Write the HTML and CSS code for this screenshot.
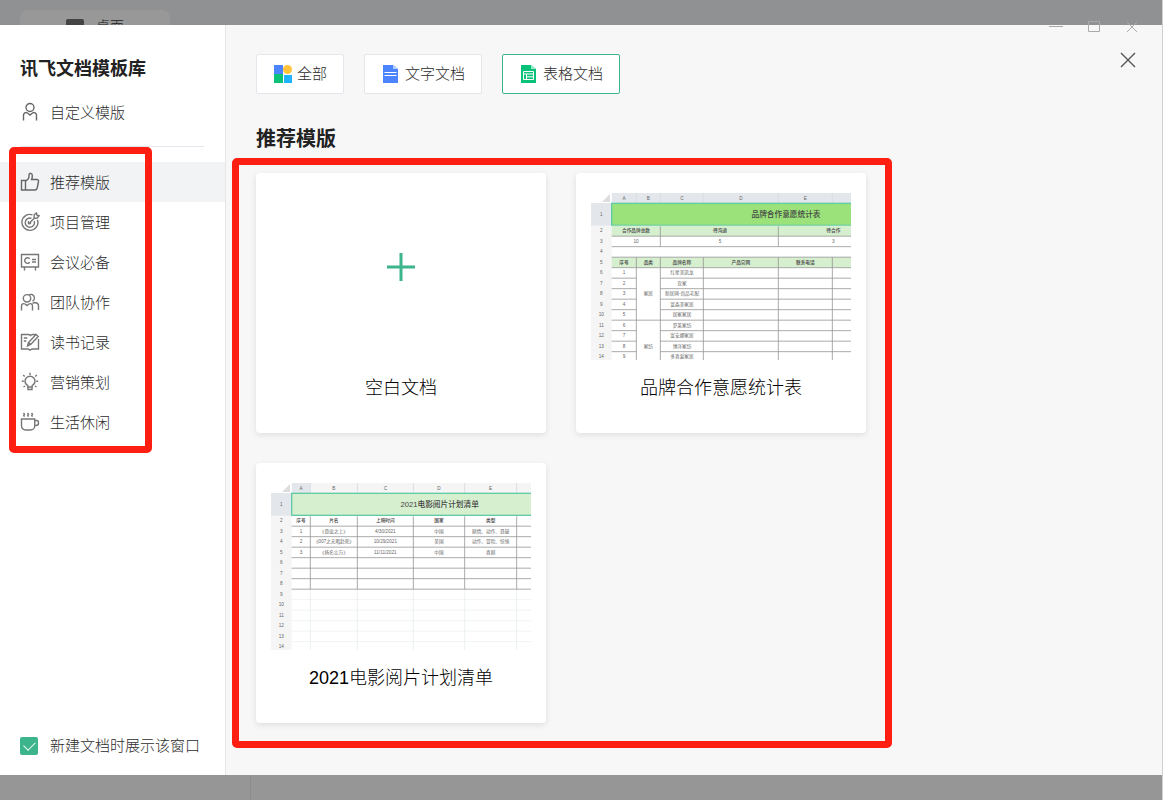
FILE: index.html
```html
<!DOCTYPE html>
<html lang="zh-CN">
<head>
    <meta charset="UTF-8">
    <meta name="viewport" content="width=device-width, initial-scale=1.0">
    <title>讯飞文档模板库</title>
    <link rel="stylesheet" href="styles.css">
</head>
<body>
    <div class="desktop">
        <div class="topbar">
            <div class="tab">
                <span class="tab-icon"></span>
                <span>桌面</span>
            </div>
        </div>
        <div class="window-controls">
            <button type="button" aria-label="最小化"><svg width="14" height="14" viewBox="0 0 14 14"><path d="M0 6.500h14"/></svg></button>
            <button type="button" aria-label="最大化"><svg width="14" height="14" viewBox="0 0 14 14"><path d="M1.500 1.500h11v10h-11z"/></svg></button>
            <button type="button" aria-label="关闭窗口"><svg width="14" height="14" viewBox="0 0 14 14"><path d="M2 2l10 10M12 2L2 12"/></svg></button>
        </div>

        <div class="dialog">
            <aside class="sidebar">
                <h1>讯飞文档模板库</h1>
                <a class="item" href="#custom">
                    <svg class="icon" viewBox="0 0 20 20"><circle cx="10" cy="5.500" r="4"/><path d="M3.500 18.500v-5.300a2.600 2.600 0 0 1 4-2.200L10 13l2.500-2a2.600 2.600 0 0 1 4 2.200v5.300"/></svg>
                    自定义模版
                </a>
                <hr>
                <nav class="menu">
                    <a class="item active" href="#recommend">
                        <svg class="icon" viewBox="0 0 20 20"><path d="M1.500 8.500h4v9.500h-4zM5.500 9c2.200-.8 3.200-2 3.400-4l.2-2.500c.3-1.800 3-1.500 3.200.7.100 1.400-.2 3-.7 4.300h5.200c1.300 0 1.900.8 1.700 2l-1.300 6.500c-.3 1.300-1 2-2.200 2H5.500"/></svg>
                        推荐模版
                    </a>
                    <a class="item" href="#project">
                        <svg class="icon light" viewBox="0 0 20 20"><path d="M12.500 2.800a8 8 0 1 0 5 5M11.500 6.300a4.600 4.600 0 1 0 2.700 2.800M9.500 11l5-5M10.700 10.700a1.200 1.200 0 1 1-1.600-1.200M14 6l.3-3.300L16.500 1l.5 2.200 2 .6-1.800 2.200L14 6.500z"/></svg>
                        项目管理
                    </a>
                    <a class="item" href="#meeting">
                        <svg class="icon light" viewBox="0 0 20 20"><path d="M1.500 2.500h17v12.500h-17zM4.500 15v3.500M15.500 15v3.500M9.700 6.800a2.800 2.800 0 1 0 0 3.500M12 7.500h4M12 10h4"/></svg>
                        会议必备
                    </a>
                    <a class="item" href="#team">
                        <svg class="icon light" viewBox="0 0 20 20"><circle cx="7" cy="6.300" r="3.700"/><path d="M1.500 18.500V14a2.300 2.300 0 0 1 3.500-2l2 1.500L9 12a2.300 2.300 0 0 1 3.500 2v4.500M9 2.800a3.600 3.600 0 1 1 3.500 6.300M12.500 11.500l1.500-1 2 .2a3 3 0 0 1 2.500 3v4.300"/></svg>
                        团队协作
                    </a>
                    <a class="item" href="#reading">
                        <svg class="icon light" viewBox="0 0 20 20"><path d="M11 3.500c-1-.9-2-1-3-1H1.500v14.500H8l2 1.200 2-1.200h6.500V7M10 4l1-1 1.500-.5h3M3.800 6h3.500M3.800 9h2.500M7.500 14l1-3.500 7.500-8 2.200 2-7.500 8zM8.500 10.500l2.200 2"/></svg>
                        读书记录
                    </a>
                    <a class="item" href="#marketing">
                        <svg class="icon light" viewBox="0 0 20 20"><path d="M7.800 15v-1.500C6 12.500 5 11.200 5 9.200a5 5 0 0 1 10 0c0 2-1 3.300-2.800 4.300V15zM8 17.500h4M8 15v2.500h4V15M10 3V.8M4.700 4.500L3.200 3M15.300 4.500L16.800 3M3.800 9.300H1.800M16.200 9.300h2M5 14l-1.500 1M15 14l1.500 1"/></svg>
                        营销策划
                    </a>
                    <a class="item" href="#life">
                        <svg class="icon light" viewBox="0 0 20 20"><path d="M1.500 7h13.200v7a4 4 0 0 1-4 4H5.500a4 4 0 0 1-4-4zM14.700 8.500h1.800a2 2 0 0 1 2 2v.5a2.500 2.500 0 0 1-2.500 2.500h-1.300M3.500 1l1 1.300-.8 1.200.8 1.200M7.500 1l1 1.300-.8 1.200.8 1.200M11.500 1l1 1.300-.8 1.200.8 1.200"/></svg>
                        生活休闲
                    </a>
                    <div class="marker"></div>
                </nav>
                <label class="show-again" for="show-again">
                    <input type="checkbox" id="show-again" checked>
                    新建文档时展示该窗口
                </label>
            </aside>

            <main class="content">
                <button class="close" type="button" aria-label="关闭">
                    <svg width="16" height="16" viewBox="0 0 16 16"><path d="M1 1l14 14M15 1L1 15"/></svg>
                </button>
                <div class="filters">
                    <button type="button">
                        <svg width="20" height="20" viewBox="0 0 20 20"><path fill="#4c84ff" d="M1 1h9v9H1z"/><circle fill="#ffc43a" cx="14.500" cy="5.500" r="4.500"/><path fill="#09c27a" d="M1 10h9v9H1z"/><path fill="#1eb2ff" d="M11 11h8v8h-8z"/></svg>
                        全部
                    </button>
                    <button type="button">
                        <svg width="20" height="20" viewBox="0 0 20 20"><path fill="#4c84ff" d="M2 1h10l5 4v14H2z"/><path fill="#b5ccff" d="M12 1l5 4h-5z"/><path stroke="#fff" d="M3.500 8.500h12M3.500 11.500h12"/></svg>
                        文字文档
                    </button>
                    <button class="selected" type="button">
                        <svg width="20" height="20" viewBox="0 0 20 20"><path fill="#09c27a" d="M2 1h10l5 4v14H2z"/><path fill="#a0e8cb" d="M12 1l5 4h-5z"/><path fill="none" stroke="#fff" d="M4.500 7.500h10v8h-10zM4.500 10h10M7.500 10v5.500M7.500 12.800h7"/></svg>
                        表格文档
                    </button>
                </div>
                <h2>推荐模版</h2>
                <div class="templates">
                    <a class="card" href="#blank">
                        <span class="preview">
                            <svg width="28" height="28" viewBox="0 0 28 28"><path stroke="#3cb48c" stroke-width="3" d="M0 14h28M14 0v28"/></svg>
                        </span>
                        <span class="card-title">空白文档</span>
                    </a>
                    <a class="card" href="#brand">
                        <span class="preview sheet"><svg id="brand-sheet" viewBox="0 0 780 501"></svg></span>
                        <span class="card-title">品牌合作意愿统计表</span>
                    </a>
                    <a class="card" href="#movie">
                        <span class="preview sheet"><svg id="movie-sheet" viewBox="0 0 780 501"></svg></span>
                        <span class="card-title">2021电影阅片计划清单</span>
                    </a>
                    <div class="marker"></div>
                </div>
            </main>
        </div>
        <div class="bottombar"></div>
    </div>
    <script src="script.js"></script>
</body>
</html>
```
FILE: styles.css
```css
* {
    box-sizing: border-box;
}

body {
    margin: 0;
    font-family: "Liberation Sans", "Noto Sans CJK SC", sans-serif;
    font-size: 15px;
    font-weight: 300;
    color: #2c2c2c;
    background-color: #969696;
}

a {
    color: inherit;
    text-decoration: none;
}

button {
    font: inherit;
    color: inherit;
    cursor: pointer;
}

svg {
    flex: none;
}

.desktop {
    position: relative;
    display: flex;
    flex-direction: column;
    min-height: 100vh;
    border-right: 1px solid #d0d0d0;
}

/* dimmed window behind the dialog */
.topbar {
    height: 25px;
    padding: 10px 20px 0;
    overflow: hidden;
    background-color: #909193;
}

.tab {
    display: flex;
    gap: 12px;
    width: 150px;
    height: 30px;
    padding-left: 46px;
    border-radius: 8px;
    background-color: #989898;
    color: #222;
    font-size: 14px;
    line-height: 32px;
}

.tab-icon {
    width: 18px;
    height: 14px;
    margin-top: 9px;
    border-radius: 2px;
    background-color: #444;
}

.window-controls {
    position: absolute;
    top: 20px;
    right: 23px;
    display: flex;
    gap: 24px;
}

.window-controls button,
.close {
    display: flex;
    padding: 0;
    border: none;
    background: none;
}

.window-controls path {
    fill: none;
    stroke: #aaa;
}

.bottombar {
    height: 25px;
    background: linear-gradient(#8c8c8c, #8c8c8c) 250px 0 / 1px 25px no-repeat;
}

.dialog {
    display: flex;
    flex: 1;
    background-color: #f7f7f7;
}

.sidebar {
    display: flex;
    flex-direction: column;
    flex: none;
    width: 226px;
    padding: 31px 0 19px;
    border-right: 1px solid #e4e6e8;
    background-color: #fff;
}

h1 {
    margin: 0 20px 10px;
    color: #222;
    font-size: 18px;
    line-height: 26px;
}

hr {
    width: 184px;
    margin: 14px 20px 15px;
    border: none;
    border-top: 1px solid #e4e6ee;
}

.item {
    display: flex;
    align-items: center;
    gap: 10px;
    height: 40px;
    padding: 0 20px;
    line-height: 21px;
}

.item.active {
    background-color: #f2f3f5;
}

.icon {
    width: 20px;
    height: 20px;
    fill: none;
    stroke: #666;
    stroke-width: 1.4;
}

.icon.light {
    stroke: #777;
}

.menu {
    position: relative;
}

.marker {
    position: absolute;
    border: 7px solid #ff1f12;
    border-radius: 5px;
    pointer-events: none;
}

.menu .marker {
    top: -15px;
    bottom: -11px;
    left: 9px;
    width: 143px;
}

.show-again {
    display: flex;
    align-items: center;
    gap: 12px;
    margin: auto 20px 0;
    line-height: 20px;
}

.show-again input {
    appearance: none;
    width: 18px;
    height: 18px;
    margin: 0;
    padding: 4px;
    border-radius: 2px;
    background-color: #3cb48c;
}

.show-again input::after {
    content: "";
    display: block;
    width: 10px;
    height: 6px;
    border-left: 1px solid #fff;
    border-bottom: 1px solid #fff;
    transform: rotate(-45deg);
}

.content {
    position: relative;
    flex: 1;
    padding: 29px 30px 52px;
}

.close {
    position: absolute;
    top: 27px;
    right: 26px;
}

.close path {
    stroke: #555;
    stroke-width: 1.4;
}

.filters {
    display: flex;
    gap: 20px;
}

.filters button {
    display: flex;
    align-items: center;
    gap: 4px;
    height: 40px;
    padding: 0 16px;
    border: 1px solid #e4e6ec;
    border-radius: 2px;
    background-color: #fff;
    line-height: 20px;
}

.filters .selected {
    border-color: #3cb48c;
}

h2 {
    margin: 30px 0 19px;
    color: #222;
    font-size: 20px;
    line-height: 30px;
}

.templates {
    position: relative;
    display: grid;
    grid-template-columns: repeat(auto-fill, 290px);
    gap: 30px;
}

.templates .marker {
    top: -15px;
    bottom: -25px;
    left: -24px;
    width: 660px;
}

.card {
    height: 260px;
    border-radius: 4px;
    background-color: #fff;
    box-shadow: 0 2px 6px rgba(0, 0, 0, 0.1);
    color: #000;
    text-align: center;
}

.preview {
    display: flex;
    align-items: center;
    justify-content: center;
    height: 187px;
}

.preview.sheet {
    padding: 20px 15px 0;
}

.sheet svg {
    width: 260px;
    height: 167px;
}

.card-title {
    display: block;
    margin-top: 15px;
    font-size: 18px;
    line-height: 26px;
}

/* spreadsheet thumbnails */
.sheet text {
    fill: #666;
    font-size: 14px;
    font-weight: 400;
    text-anchor: middle;
    dominant-baseline: central;
}

.sheet .sheet-title {
    fill: #444;
    font-size: 23px;
    font-weight: 500;
}

.sheet .head {
    fill: #444;
    font-weight: 500;
}
```
FILE: script.js
```js
const ROW = 31.5;
const FIRST = 98;

// top of a spreadsheet row, counting from row 2
const rowTop = n => FIRST + (n - 2) * ROW;
const rect = (x, y, w, h, fill) => `<rect x="${x}" y="${y}" width="${w}" height="${h}" fill="${fill}"/>`;
const line = (x1, y1, x2, y2, color) => `<path d="M${x1} ${y1}L${x2} ${y2}" stroke="${color}" stroke-width="2.5"/>`;
const text = (x, y, value, cls = '') => `<text x="${x}" y="${y}" class="${cls}">${value}</text>`;
const cell = (x, row, value, cls) => text(x, rowTop(row) + ROW / 2, value, cls);

// header row, row numbers and the merged title row
function frame(cols, title, titleX, color, headColor) {
    let out = rect(0, 0, 780, 501, '#fff') + rect(0, 0, 62, 501, '#f5f5f5');
    out += rect(62, 0, 718, 30, headColor) + rect(0, 30, 62, 68, '#e3e7ec');
    out += rect(62, 0, cols[1] - 62, 30, '#e3e7ec');
    out += rect(0, 0, 62, 30, '#fff') + '<path d="M57 3v24H33z" fill="#ddd"/>';
    cols.slice(0, 5).forEach((x, i) => {
        out += text((x + cols[i + 1]) / 2, 17, 'ABCDE'[i]);
        out += line(cols[i + 1], 0, cols[i + 1], 30, '#d8dadd');
    });
    out += text(31, 65, 1);
    for (let n = 2; n <= 14; n++) {
        out += cell(31, n, n);
    }
    out += `<rect x="62" y="31" width="740" height="66" fill="${color}" stroke="#60cba5" stroke-width="4"/>`;
    return out + text(titleX, 64, title, 'sheet-title');
}

function brandSheet() {
    const cols = [62, 136, 208, 337, 562, 724, 886];
    const dark = '#999';
    let out = rect(62, FIRST, 718, ROW, '#d6efcf') + rect(62, rowTop(5), 718, ROW, '#d6efcf');
    [[135, '合作品牌总数', 10], [387, '待沟通', 5], [727, '待合作', 3]].forEach(([x, name, count]) => {
        out += cell(x, 2, name, 'head') + cell(x, 3, count);
    });
    [3, 4, 5, 6].forEach(n => {
        out += line(62, rowTop(n), 780, rowTop(n), dark);
    });
    [208, 562].forEach(x => {
        out += line(x, FIRST + 2, x, rowTop(4), dark);
    });
    ['序号', '品类', '品牌名称', '产品官网', '联系电话'].forEach((name, i) => {
        out += cell((cols[i] + cols[i + 1]) / 2, 5, name, 'head');
    });
    cols.slice(1, 6).forEach(x => {
        out += line(x, rowTop(5), x, 501, dark);
    });
    ['红星美凯龙', '宜家', '新居网-尚品宅配', '富森美家居', '居家家居', '罗莱家纺', '富安娜家居', '博洋家纺', '多喜爱家居'].forEach((name, i) => {
        const y = rowTop(i + 7);
        out += cell(99, i + 6, i + 1) + cell(273, i + 6, name);
        out += line(62, y, 136, y, dark) + line(208, y, 780, y, dark);
    });
    out += line(136, rowTop(11), 208, rowTop(11), dark);
    out += cell(172, 8, '家居') + cell(172, 13, '家纺');
    return frame(cols, '品牌合作意愿统计表', 585, '#9be27a', '#e3e7ec') + out;
}

function movieSheet() {
    const cols = [62, 118, 259, 427, 581, 737, 893];
    const rows = [
        ['序号', '片名', '上映时间', '国家', '类型'],
        ['1', '《悬崖之上》', '4/30/2021', '中国', '剧情、动作、悬疑'],
        ['2', '《007之无暇赴死》', '10/29/2021', '美国', '动作、冒险、惊悚'],
        ['3', '《扬名立万》', '11/11/2021', '中国', '喜剧']
    ];
    let out = frame(cols, '2021电影阅片计划清单', 506, '#d6efcf', '#f5f5f5');
    for (let n = 10; n <= 14; n++) {
        out += line(62, rowTop(n), 780, rowTop(n), '#edf0f0');
    }
    cols.slice(1, 6).forEach(x => {
        out += line(x, rowTop(9), x, 501, '#e8eded') + line(x, FIRST + 2, x, rowTop(9), '#999');
    });
    for (let n = 3; n <= 9; n++) {
        out += line(62, rowTop(n), 780, rowTop(n), '#999');
    }
    rows.forEach((row, r) => {
        row.forEach((value, i) => {
            out += cell((cols[i] + cols[i + 1]) / 2, r + 2, value, r === 0 ? 'head' : '');
        });
    });
    return out;
}

document.getElementById('brand-sheet').innerHTML = brandSheet();
document.getElementById('movie-sheet').innerHTML = movieSheet();
```
